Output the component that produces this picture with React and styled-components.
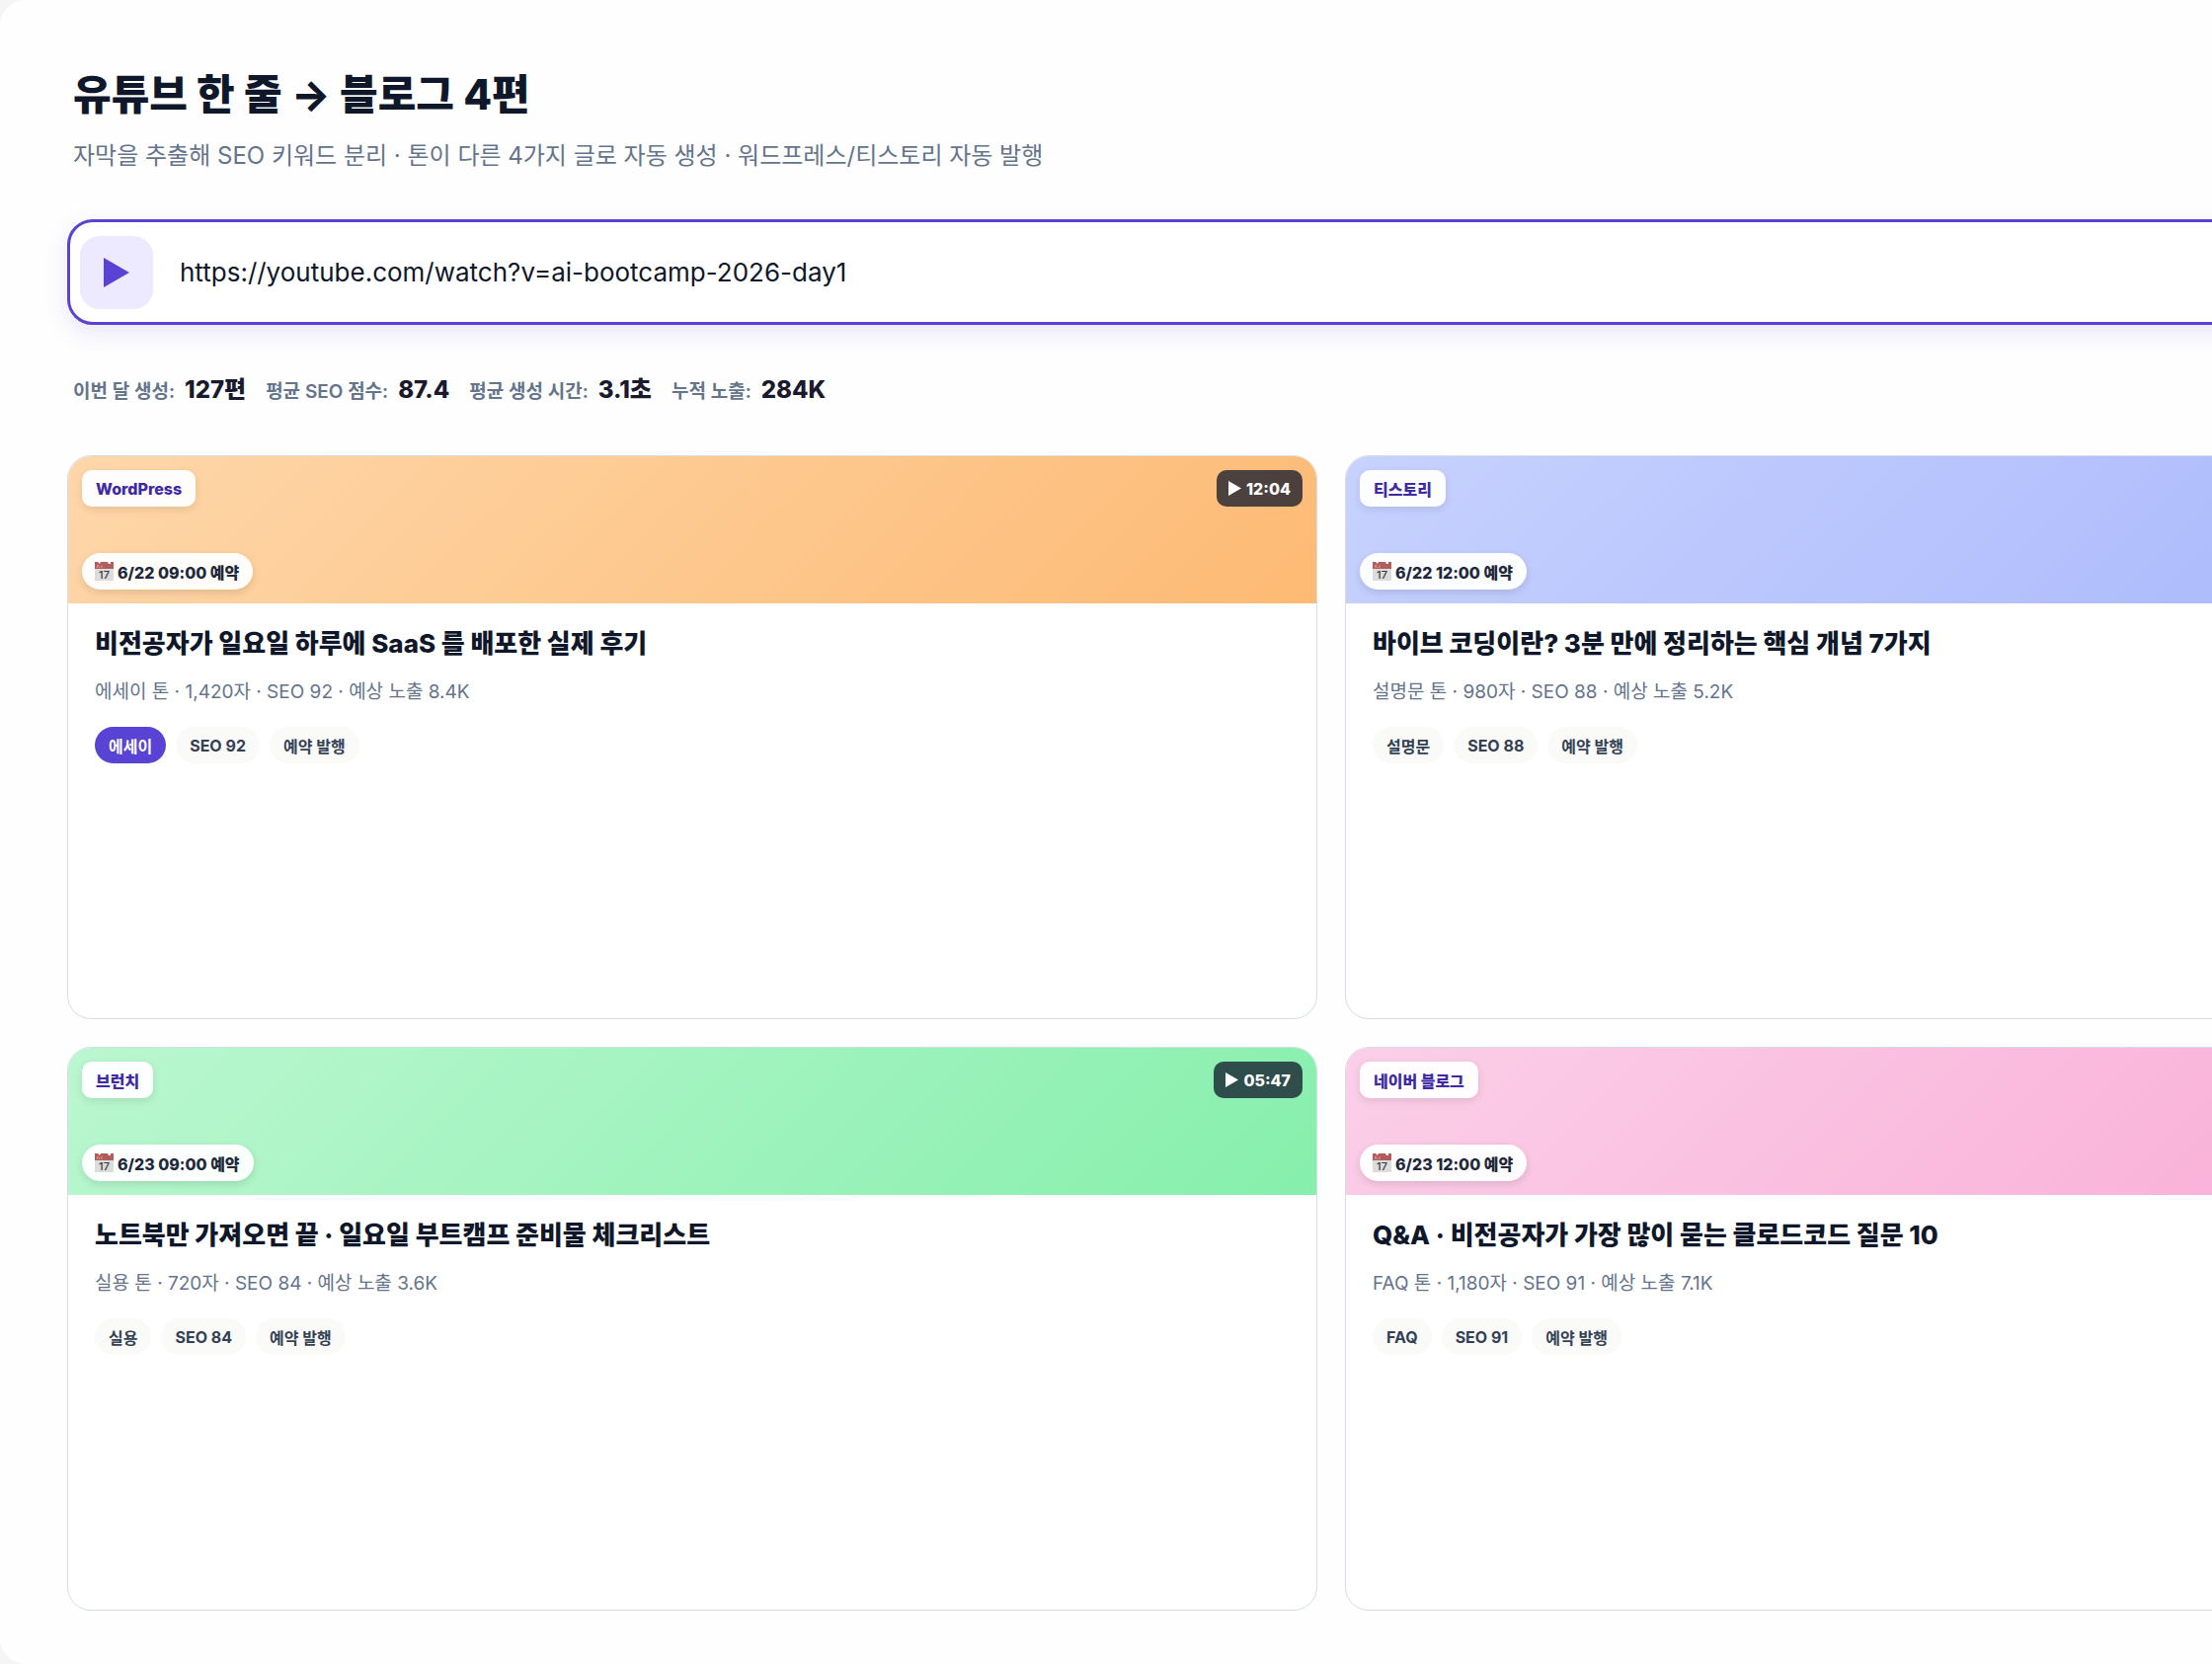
import React, { useState } from "react";
import styled, { createGlobalStyle } from "styled-components";

const stats = [
  { label: "이번 달 생성:", value: "127편" },
  { label: "평균 SEO 점수:", value: "87.4" },
  { label: "평균 생성 시간:", value: "3.1초" },
  { label: "누적 노출:", value: "284K" },
];

const posts = [
  {
    id: 1,
    platform: "WordPress",
    length: "12:04",
    schedule: "6/22 09:00 예약",
    title: "비전공자가 일요일 하루에 SaaS 를 배포한 실제 후기",
    meta: "에세이 톤 · 1,420자 · SEO 92 · 예상 노출 8.4K",
    tags: ["에세이", "SEO 92", "예약 발행"],
    active: "에세이",
    from: "#fed7aa",
    to: "#fdba74",
  },
  {
    id: 2,
    platform: "티스토리",
    schedule: "6/22 12:00 예약",
    title: "바이브 코딩이란? 3분 만에 정리하는 핵심 개념 7가지",
    meta: "설명문 톤 · 980자 · SEO 88 · 예상 노출 5.2K",
    tags: ["설명문", "SEO 88", "예약 발행"],
    from: "#c7d2fe",
    to: "#a5b4fc",
  },
  {
    id: 3,
    platform: "브런치",
    length: "05:47",
    schedule: "6/23 09:00 예약",
    title: "노트북만 가져오면 끝 · 일요일 부트캠프 준비물 체크리스트",
    meta: "실용 톤 · 720자 · SEO 84 · 예상 노출 3.6K",
    tags: ["실용", "SEO 84", "예약 발행"],
    from: "#bbf7d0",
    to: "#86efac",
  },
  {
    id: 4,
    platform: "네이버 블로그",
    schedule: "6/23 12:00 예약",
    title: "Q&A · 비전공자가 가장 많이 묻는 클로드코드 질문 10",
    meta: "FAQ 톤 · 1,180자 · SEO 91 · 예상 노출 7.1K",
    tags: ["FAQ", "SEO 91", "예약 발행"],
    from: "#fbcfe8",
    to: "#f9a8d4",
  },
];

const PlayIcon = ({ width, height }) => (
  <svg width={width} height={height} viewBox='0 0 26 30' aria-hidden='true'>
    <path d='M0 0L26 15L0 30Z' fill='currentColor' />
  </svg>
);

const CalendarIcon = () => (
  <svg width='19' height='19' viewBox='0 0 19 19' aria-hidden='true'>
    <path d='M0 0H19V19H0Z' fill='#dcdcdc' />
    <path d='M0 0H19V7H0Z' fill='#b25c5c' />
    <path d='M3 0H6L5 2ZM13 0H16V2H14Z' fill='#fff' />
    <path d='M2 6L3 3L5 6M7 3V6' stroke='#d99a9a' fill='none' />
    <text x='9.5' y='17' textAnchor='middle' fontSize='11' fontWeight='500' fill='#3a3a3a'>
      17
    </text>
  </svg>
);

const PostCard = ({ post }) => (
  <Card>
    <Banner $from={post.from} $to={post.to}>
      <BannerRow>
        <Platform>{post.platform}</Platform>
        {post.length && (
          <Length>
            <PlayIcon width={13} height={15} />
            {post.length}
          </Length>
        )}
      </BannerRow>
      <BannerRow>
        <Schedule>
          <CalendarIcon />
          {post.schedule}
        </Schedule>
      </BannerRow>
    </Banner>
    <Body>
      <h2>{post.title}</h2>
      <p>{post.meta}</p>
      <Tags>
        {post.tags.map(tag => (
          <Tag key={tag} $active={tag === post.active}>
            {tag}
          </Tag>
        ))}
      </Tags>
    </Body>
  </Card>
);

const App = () => {
  const [url, setUrl] = useState("https://youtube.com/watch?v=ai-bootcamp-2026-day1");

  return (
    <>
      <GlobalStyle />
      <Page>
        <Header>
          <h1>유튜브 한 줄 → 블로그 4편</h1>
          <p>자막을 추출해 SEO 키워드 분리 · 톤이 다른 4가지 글로 자동 생성 · 워드프레스/티스토리 자동 발행</p>
        </Header>
        <UrlBox>
          <UrlIcon>
            <PlayIcon width={26} height={30} />
          </UrlIcon>
          <UrlInput
            type='text'
            aria-label='유튜브 주소'
            value={url}
            onChange={e => setUrl(e.target.value)}
          />
        </UrlBox>
        <Stats>
          {stats.map(stat => (
            <li key={stat.label}>
              {stat.label} <strong>{stat.value}</strong>
            </li>
          ))}
        </Stats>
        <Grid>
          {posts.map(post => (
            <PostCard key={post.id} post={post} />
          ))}
        </Grid>
      </Page>
    </>
  );
};

export default App;

const GlobalStyle = createGlobalStyle`
  * {
    box-sizing: border-box;
  }
  body {
    margin: 0;
    background: #f5f5f5;
    color: #0f172a;
    font-family: Inter, "Noto Sans CJK KR", sans-serif;
    overflow: hidden;
  }
  h1, h2, p, ul {
    margin: 0;
    padding: 0;
  }
`;

// wider than the window, the right column runs off the edge
const Page = styled.main`
  display: flex;
  flex-direction: column;
  width: 120vw;
  min-height: 100vh;
  padding: 64px 60px 54px 68px;
  border-radius: 26px;
  background: #fefefe;
`;

const Header = styled.header`
  padding: 0 6px;
  h1 {
    font-size: 42px;
    line-height: 64px;
    font-weight: 800;
  }
  p {
    margin-top: 12px;
    font-size: 24px;
    line-height: 36px;
    color: #64748b;
  }
`;

const UrlBox = styled.div`
  display: flex;
  align-items: center;
  gap: 25px;
  margin-top: 46px;
  height: 107px;
  padding: 0 10px;
  border: 3px solid #5843d4;
  border-radius: 26px;
  background: #fff;
  box-shadow: 0 8px 24px rgba(88, 67, 212, 0.13);
`;

const UrlIcon = styled.span`
  display: flex;
  align-items: center;
  justify-content: center;
  flex: none;
  width: 74px;
  height: 74px;
  border-radius: 20px;
  background: #ede9fe;
  color: #5843d4;
`;

const UrlInput = styled.input`
  flex: 1;
  border: 0;
  outline: 0;
  background: transparent;
  font-family: inherit;
  font-size: 26px;
  color: #0f172a;
`;

const Stats = styled.ul`
  display: flex;
  gap: 20px;
  margin-top: 50px;
  padding: 0 6px;
  list-style: none;
  li {
    display: flex;
    align-items: baseline;
    gap: 10px;
    font-size: 19px;
    line-height: 32px;
    font-weight: 600;
    color: #64748b;
  }
  strong {
    font-size: 24px;
    font-weight: 800;
    color: #1a1a2e;
  }
`;

const Grid = styled.section`
  flex: 1;
  display: grid;
  grid-template-columns: 1fr 1fr;
  grid-auto-rows: 1fr;
  gap: 28px;
  margin-top: 48px;
`;

const Card = styled.article`
  overflow: hidden;
  border: 1px solid #d5dde9;
  border-radius: 24px;
  background: #fff;
`;

const Banner = styled.div`
  display: flex;
  flex-direction: column;
  justify-content: space-between;
  height: 149px;
  padding: 14px;
  background: linear-gradient(135deg, ${props => props.$from}, ${props => props.$to});
`;

const BannerRow = styled.div`
  display: flex;
  justify-content: space-between;
`;

const Pill = styled.span`
  display: inline-flex;
  align-items: center;
  height: 37px;
  padding: 0 14px;
  border-radius: 10px;
  font-size: 16px;
  font-weight: 700;
  white-space: nowrap;
`;

const Platform = styled(Pill)`
  background: rgba(255, 255, 255, 0.95);
  color: #3f2aa5;
  font-weight: 800;
  box-shadow: 0 3px 9px rgba(0, 0, 0, 0.1);
`;

const Length = styled(Pill)`
  gap: 5px;
  padding: 0 12px;
  background: rgba(15, 23, 42, 0.75);
  color: #fff;
  font-weight: 800;
`;

const Schedule = styled(Pill)`
  gap: 4px;
  padding: 0 14px 0 13px;
  border-radius: 19px;
  background: rgba(255, 255, 255, 0.95);
  color: #1e293b;
  font-weight: 800;
  box-shadow: 0 3px 9px rgba(0, 0, 0, 0.12);
`;

const Body = styled.div`
  padding: 22px 27px;
  h2 {
    font-size: 26px;
    line-height: 38px;
    font-weight: 800;
  }
  p {
    margin-top: 15px;
    font-size: 19px;
    line-height: 30px;
    color: #64748b;
  }
`;

const Tags = styled.div`
  display: flex;
  gap: 10px;
  margin-top: 20px;
`;

const Tag = styled(Pill)`
  border-radius: 19px;
  background: ${props => (props.$active ? "#5843d4" : "#fafaf9")};
  color: ${props => (props.$active ? "#fff" : "#334155")};
`;
